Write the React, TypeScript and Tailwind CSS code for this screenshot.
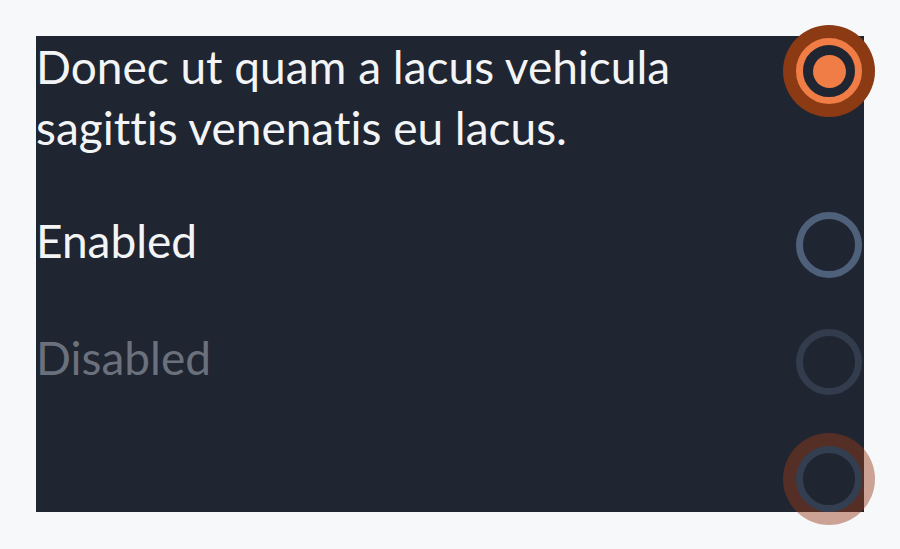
type RadioProps = {
  variant: 'checked' | 'enabled' | 'disabled' | 'focused';
};

const Radio = ({ variant }: RadioProps) => {
  return (
    <div className="relative flex h-[70px] w-[70px] shrink-0 items-center justify-center">
      {variant === 'checked' && (
        <span className="absolute left-1/2 top-1/2 h-[92px] w-[92px] -translate-x-1/2 -translate-y-1/2 rounded-full bg-[#8b3a14]" />
      )}
      {variant === 'focused' && (
        <span className="absolute left-1/2 top-1/2 h-[92px] w-[92px] -translate-x-1/2 -translate-y-1/2 rounded-full bg-[#97391a]/45" />
      )}
      <span
        className={
          variant === 'checked'
            ? 'relative flex h-[66px] w-[66px] items-center justify-center rounded-full border-[7px] border-[#ef7d45] bg-[#1f2531]'
            : variant === 'enabled'
              ? 'relative h-[66px] w-[66px] rounded-full border-[7px] border-[#4f607a]'
              : variant === 'focused'
                ? 'relative h-[66px] w-[66px] rounded-full border-[7px] border-[#333e50] bg-[#1f2531]'
                : 'relative h-[66px] w-[66px] rounded-full border-[7px] border-[#323c4d]'
        }
      >
        {variant === 'checked' && <span className="h-[33px] w-[33px] rounded-full bg-[#ef7d45]" />}
      </span>
    </div>
  );
};

export default function App() {
  return (
    <div className="min-h-[549px] w-full bg-[#f7f8fa] p-9 font-['Lato',sans-serif] text-[46px] leading-[61px] [font-variant-ligatures:none]">
      <div className="flex h-[476px] flex-col bg-[#1f2531]">
        <div className="flex items-start justify-between">
          <p className="text-[#f3f4f6]">Donec ut quam a lacus vehicula sagittis venenatis eu lacus.</p>
          <Radio variant="checked" />
        </div>
        <div className="mt-[52px] flex items-start justify-between">
          <p className="text-[#f3f4f6]">Enabled</p>
          <Radio variant="enabled" />
        </div>
        <div className="mt-[47px] flex items-start justify-between">
          <p className="text-[#6b717c]">Disabled</p>
          <Radio variant="disabled" />
        </div>
        <div className="mt-[47px] flex items-start justify-end">
          <Radio variant="focused" />
        </div>
      </div>
    </div>
  );
}
